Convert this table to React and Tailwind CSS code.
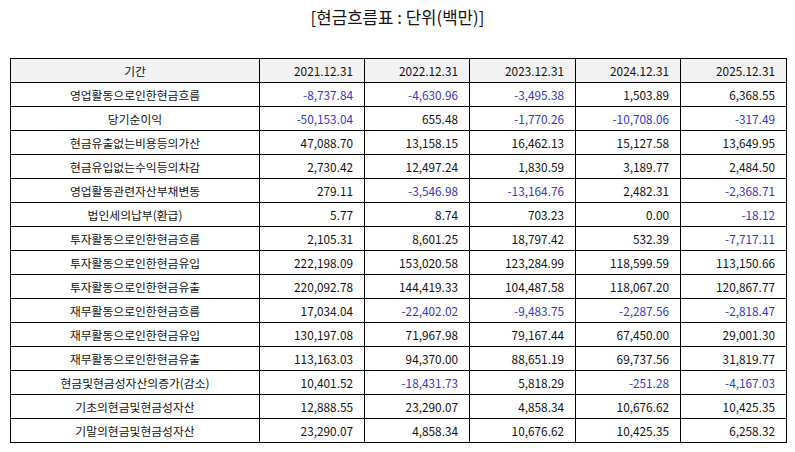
import React from "react";

const dates = ["2021.12.31", "2022.12.31", "2023.12.31", "2024.12.31", "2025.12.31"];

const rows = [
  ["영업활동으로인한현금흐름", "-8,737.84", "-4,630.96", "-3,495.38", "1,503.89", "6,368.55"],
  ["당기순이익", "-50,153.04", "655.48", "-1,770.26", "-10,708.06", "-317.49"],
  ["현금유출없는비용등의가산", "47,088.70", "13,158.15", "16,462.13", "15,127.58", "13,649.95"],
  ["현금유입없는수익등의차감", "2,730.42", "12,497.24", "1,830.59", "3,189.77", "2,484.50"],
  ["영업활동관련자산부채변동", "279.11", "-3,546.98", "-13,164.76", "2,482.31", "-2,368.71"],
  ["법인세의납부(환급)", "5.77", "8.74", "703.23", "0.00", "-18.12"],
  ["투자활동으로인한현금흐름", "2,105.31", "8,601.25", "18,797.42", "532.39", "-7,717.11"],
  ["투자활동으로인한현금유입", "222,198.09", "153,020.58", "123,284.99", "118,599.59", "113,150.66"],
  ["투자활동으로인한현금유출", "220,092.78", "144,419.33", "104,487.58", "118,067.20", "120,867.77"],
  ["재무활동으로인한현금흐름", "17,034.04", "-22,402.02", "-9,483.75", "-2,287.56", "-2,818.47"],
  ["재무활동으로인한현금유입", "130,197.08", "71,967.98", "79,167.44", "67,450.00", "29,001.30"],
  ["재무활동으로인한현금유출", "113,163.03", "94,370.00", "88,651.19", "69,737.56", "31,819.77"],
  ["현금및현금성자산의증가(감소)", "10,401.52", "-18,431.73", "5,818.29", "-251.28", "-4,167.03"],
  ["기초의현금및현금성자산", "12,888.55", "23,290.07", "4,858.34", "10,676.62", "10,425.35"],
  ["기말의현금및현금성자산", "23,290.07", "4,858.34", "10,676.62", "10,425.35", "6,258.32"],
];

const App = () => {
  return (
    <div className="w-[795px] h-[452px] bg-white font-['Noto_Sans_CJK_KR',sans-serif] text-[#111]">
      {/* Title */}
      <div className="pt-[5px] h-[58px] text-center text-[16.8px] leading-[24px]">
        [현금흐름표 : 단위(백만)]
      </div>

      {/* Table */}
      <div className="px-[10px]">
        <table className="w-[776px] border-collapse table-fixed text-[11.8px] leading-[16px]">
          <colgroup>
            <col className="w-[249px]" />
            <col className="w-[105px]" />
            <col className="w-[105px]" />
            <col className="w-[106px]" />
            <col className="w-[105px]" />
            <col className="w-[106px]" />
          </colgroup>
          <thead>
            <tr className="h-[24px] bg-[#f2f2f2]">
              <th className="border border-black font-normal text-center p-0">기간</th>
              {dates.map((d) => (
                <th key={d} className="border border-black font-normal text-right pr-[11px]">
                  {d}
                </th>
              ))}
            </tr>
          </thead>
          <tbody>
            {rows.map((r) => (
              <tr key={r[0]} className="h-[24px]">
                <td className="border border-black text-center p-0">{r[0]}</td>
                {r.slice(1).map((v, i) => (
                  <td
                    key={i}
                    className={
                      v.startsWith("-")
                        ? "border border-black text-right pr-[11px] text-[#3535cc]"
                        : "border border-black text-right pr-[11px]"
                    }
                  >
                    {v}
                  </td>
                ))}
              </tr>
            ))}
          </tbody>
        </table>
      </div>
    </div>
  );
};

export default App;
